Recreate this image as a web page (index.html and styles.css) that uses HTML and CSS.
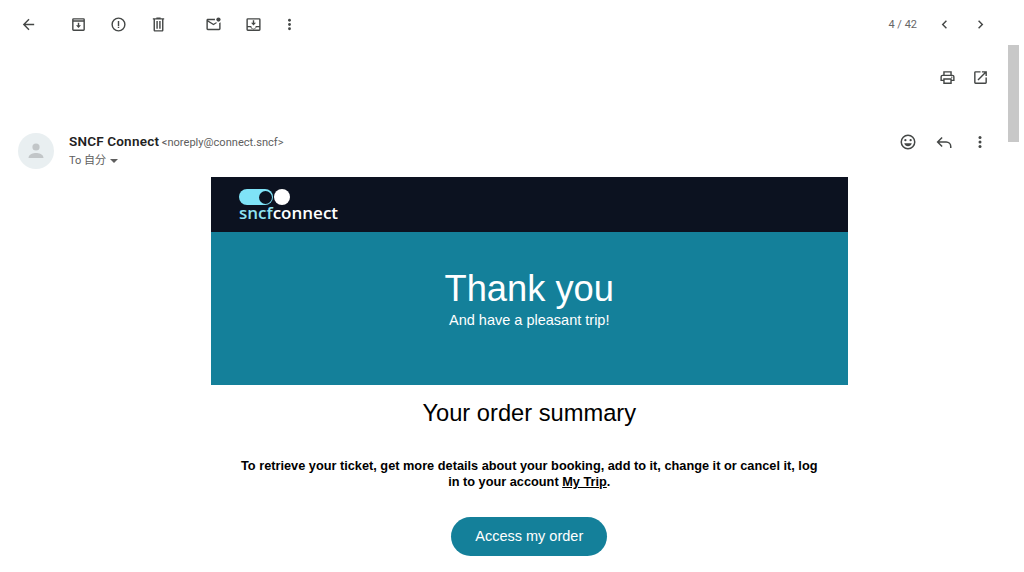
FILE: index.html
```html
<!DOCTYPE html>
<html lang="en">
<head>
<meta charset="utf-8">
<title>SNCF Connect</title>
<link rel="stylesheet" href="styles.css">
</head>
<body>
<div class="page">
  <div class="toolbar">
    <div class="tools">
      <span class="ico back"><svg viewBox="0 0 24 24"><path d="M20 11H7.830l5.590-5.590L12 4l-8 8 8 8 1.410-1.410L7.830 13H20z"/></svg></span>
      <span class="ico archive"><svg viewBox="0 0 24 24"><path d="M19 3H5a2 2 0 0 0-2 2v14a2 2 0 0 0 2 2h14a2 2 0 0 0 2-2V5a2 2 0 0 0-2-2zm0 16H5V8h14v11zM5 6V5h14v1H5z"/><path d="M13 9.500h-2V13H8.500l3.500 4 3.500-4H13z"/></svg></span>
      <span class="ico spam"><svg viewBox="0 0 24 24"><path d="M12 2a10 10 0 1 0 0 20 10 10 0 0 0 0-20zm0 18a8 8 0 1 1 0-16 8 8 0 0 1 0 16z"/><path d="M11 7h2v7h-2zM11 15h2v2h-2z"/></svg></span>
      <span class="ico trash"><svg viewBox="0 0 24 24"><path d="M15 3V2H9v1H4v2h1v15c0 1.100.9 2 2 2h10c1.100 0 2-.9 2-2V5h1V3h-5zm2 17H7V5h10v15z"/><path d="M9 7h2v11H9zM13 7h2v11h-2z"/></svg></span>
      <span class="ico unread"><svg viewBox="0 0 24 24"><path d="M22 8.980V18c0 1.100-.9 2-2 2H4c-1.100 0-2-.9-2-2V6c0-1.100.9-2 2-2h10.100a5 5 0 0 0 0 2H4l8 5 3.670-2.300c.47.430 1.020.770 1.630 1L12 13 4 8v10h16V9.900c.74-.15 1.420-.48 2-.92z"/><circle cx="19" cy="5" r="3"/></svg></span>
      <span class="ico snooze"><svg viewBox="0 0 24 24"><path d="M20 3H4a2 2 0 0 0-2 2v14a2 2 0 0 0 2 2h16a2 2 0 0 0 2-2V5a2 2 0 0 0-2-2zm0 16H4v-3h3.560a5 5 0 0 0 8.880 0H20v3zm0-5h-5v1a3 3 0 0 1-6 0v-1H4V5h16v9z"/><path d="M13 6h-2v3.500H8.500L12 13.500l3.500-4H13z"/></svg></span>
      <span class="ico more"><svg viewBox="0 0 24 24"><circle cx="12" cy="6" r="2"/><circle cx="12" cy="12" r="2"/><circle cx="12" cy="18" r="2"/></svg></span>
    </div>
    <div class="pager">
      <span class="count">4 / 42</span>
      <span class="ico prev"><svg viewBox="0 0 24 24"><path d="M15.410 7.410 14 6l-6 6 6 6 1.410-1.410L10.830 12z"/></svg></span>
      <span class="ico next"><svg viewBox="0 0 24 24"><path d="M8.590 16.590 10 18l6-6-6-6-1.410 1.410L13.170 12z"/></svg></span>
    </div>
  </div>
  <div class="print-row">
    <span class="ico"><svg viewBox="0 0 24 24"><path d="M19 8h-1V3H6v5H5a3 3 0 0 0-3 3v6h4v4h12v-4h4v-6a3 3 0 0 0-3-3zM8 5h8v3H8V5zm8 14H8v-4h8v4zm4-4h-2v-2H6v2H4v-4a1 1 0 0 1 1-1h14a1 1 0 0 1 1 1v4z"/><circle cx="18" cy="11.500" r="1"/></svg></span>
    <span class="ico"><svg viewBox="0 0 24 24"><path d="M19 19H5V5h7V3H5a2 2 0 0 0-2 2v14a2 2 0 0 0 2 2h14a2 2 0 0 0 2-2v-7h-2v7z"/><path d="M14 3v2h3.590l-9.830 9.830 1.410 1.410L19 6.410V10h2V3z"/></svg></span>
  </div>
  <div class="sender">
    <div class="avatar"><svg viewBox="0 0 36 36"><circle cx="18" cy="14" r="3.600"/><path d="M10.500 25c0-3.800 5-5 7.500-5s7.500 1.200 7.500 5z"/></svg></div>
    <div class="meta">
      <div class="from"><span class="name">SNCF Connect</span> <span class="addr">&lt;noreply@connect.sncf&gt;</span></div>
      <div class="to">To 自分 <span class="caret"></span></div>
    </div>
    <div class="actions">
      <span class="ico"><svg viewBox="0 0 24 24"><path d="M12 2a10 10 0 1 0 0 20 10 10 0 0 0 0-20zm0 18a8 8 0 1 1 0-16 8 8 0 0 1 0 16z"/><circle cx="8.500" cy="9.500" r="1.500"/><circle cx="15.500" cy="9.500" r="1.500"/><path d="M7 13.500h10c-.6 2.500-2.600 4-5 4s-4.400-1.500-5-4z"/></svg></span>
      <span class="ico"><svg viewBox="0 0 24 24"><path class="line" d="M9.500 6 3.500 12l6 6M3.500 12H15a6 6 0 0 1 6 6v2"/></svg></span>
      <span class="ico"><svg viewBox="0 0 24 24"><circle cx="12" cy="6" r="2"/><circle cx="12" cy="12" r="2"/><circle cx="12" cy="18" r="2"/></svg></span>
    </div>
  </div>
  <div class="mail">
    <div class="brand">
      <div class="logo">
        <div class="toggle"><span class="pill"><span class="knob"></span></span><span class="dot"></span></div>
        <div class="word"><span class="sncf">sncf</span>connect</div>
      </div>
    </div>
    <div class="hero">
      <h1>Thank you</h1>
      <p>And have a pleasant trip!</p>
    </div>
    <h2>Your order summary</h2>
    <p class="intro">To retrieve your ticket, get more details about your booking, add to it, change it or cancel it, log in to your account <a href="#">My Trip</a>.</p>
    <a class="cta" href="#">Access my order</a>
  </div>
</div>
<div class="scrollbar"></div>
</body>
</html>
```

FILE: styles.css
```css
html, body { margin: 0; padding: 0; height: 572px; overflow: hidden; background: #fff; }
body { font-family: "Liberation Sans", Arial, sans-serif; color: #000; }
.page { width: 1024px; display: flex; flex-direction: column; }
.ico { display: flex; align-items: center; justify-content: center; width: 16px; height: 16px; flex: none; }
.ico svg { width: 17px; height: 17px; fill: #444746; display: block; flex: none; }
.ico .line { fill: none; stroke: #444746; stroke-width: 2; }

.toolbar { height: 48px; display: flex; align-items: center; justify-content: space-between; padding: 0 36px 0 20px; }
.tools { display: flex; align-items: center; }
.tools .ico { margin-right: 24px; }
.tools .back { margin-right: 34px; }
.tools .trash { margin-right: 39px; }
.tools .unread { margin-right: 24px; }
.tools .snooze { margin-right: 20px; }
.pager { display: flex; align-items: center; }
.count { font-family: Roboto, sans-serif; font-size: 11px; color: #666; margin-right: 19px; }
.pager .next { margin-left: 20px; }

.print-row { height: 58px; display: flex; align-items: center; justify-content: flex-end; gap: 17px; padding-right: 36px; }

.sender { height: 71px; display: flex; align-items: flex-start; padding: 0 36px 0 18px; box-sizing: border-box; }
.avatar { width: 36px; height: 36px; margin-top: 27px; border-radius: 50%; background: #e9eff1; flex: none; }
.avatar svg { width: 36px; height: 36px; fill: #c2c6c8; display: block; }
.meta { margin-left: 15px; margin-top: 27px; flex: 1; }
.from { line-height: 16px; word-spacing: -0.500px; }
.name { font-family: Roboto, sans-serif; font-weight: 600; font-size: 13.500px; letter-spacing: 0.25px; color: #222; margin-right: -1.500px; }
.addr { font-family: Roboto, sans-serif; font-size: 11.100px; color: #5e5e5e; }
.to { font-family: Roboto, "Noto Sans CJK JP", sans-serif; font-size: 11px; color: #5e5e5e; margin-top: 2px; line-height: 16px; display: flex; align-items: center; gap: 4px; }
.caret { width: 0; height: 0; border-left: 4px solid transparent; border-right: 4px solid transparent; border-top: 4px solid #5e5e5e; }
.actions { display: flex; gap: 20px; margin-top: 28px; align-items: center; }
.actions .ico svg { width: 18px; height: 18px; }

.mail { width: 636.500px; margin-left: 211px; display: flex; flex-direction: column; align-items: center; }
.brand { width: 100%; height: 55px; background: #0c1220; }
.logo { padding: 12px 0 0 28px; }
.toggle { display: flex; align-items: center; }
.pill { width: 34px; height: 16px; border-radius: 8px; background: #7fe3f7; display: flex; justify-content: flex-end; align-items: center; padding-right: 1px; box-sizing: border-box; }
.knob { width: 13px; height: 13px; border-radius: 50%; background: #0c1220; }
.dot { width: 16px; height: 16px; border-radius: 50%; background: #fff; margin-left: 1px; }
.word { font-family: "Open Sans", sans-serif; font-size: 17px; font-weight: 600; line-height: 16px; color: #fff; }
.sncf { color: #8fe3f2; }

.hero { width: 100%; height: 153px; background: #14809a; color: #fff; text-align: center; box-sizing: border-box; padding-top: 36px; }
.hero h1 { margin: 0; font-size: 36.300px; font-weight: 400; line-height: 41px; }
.hero p { margin: 1px 0 0; font-size: 14.500px; line-height: 20px; }

h2 { margin: 15px 0 0; font-size: 23.700px; font-weight: 400; line-height: 27px; text-align: center; }
.intro { width: 590px; margin: 31px 0 0; font-size: 12.750px; font-weight: 700; line-height: 16px; text-align: center; }
.intro a { color: #000; }
.cta { margin-top: 27px; width: 156px; height: 39px; line-height: 39px; border-radius: 20px; background: #14809a; color: #fff; text-align: center; font-size: 14.500px; text-decoration: none; }

.scrollbar { position: absolute; left: 1008px; top: 45px; width: 11px; height: 97px; background: #c8c8c8; }
```
